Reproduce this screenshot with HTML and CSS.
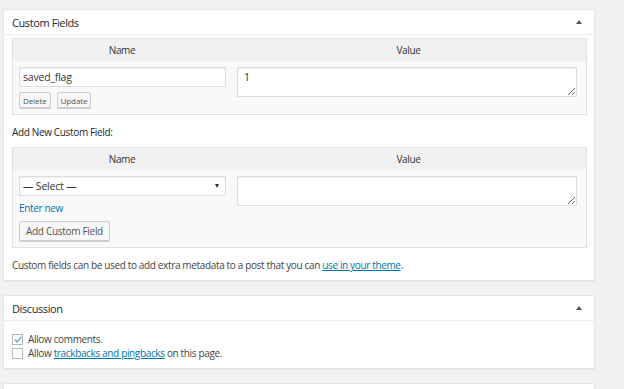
FILE: index.html
```html
<!DOCTYPE html>
<html lang="en">
<head>
    <meta charset="UTF-8">
    <title>Custom Fields</title>
    <link rel="stylesheet" href="styles.css">
</head>
<body>
    <div class="postbox">
        <div class="postbox-head">
            <h2>Custom Fields</h2>
            <span class="toggle"></span>
        </div>
        <div class="inside">
            <div class="meta-table">
                <div class="meta-head">
                    <div>Name</div>
                    <div>Value</div>
                </div>
                <div class="meta-row">
                    <div class="key-cell">
                        <input type="text" class="field" value="saved_flag">
                        <div class="actions">
                            <button class="btn btn-small">Delete</button>
                            <button class="btn btn-small">Update</button>
                        </div>
                    </div>
                    <div class="value-cell">
                        <textarea class="area">1</textarea>
                    </div>
                </div>
            </div>

            <p class="add-title">Add New Custom Field:</p>

            <div class="meta-table">
                <div class="meta-head">
                    <div>Name</div>
                    <div>Value</div>
                </div>
                <div class="meta-row">
                    <div class="key-cell">
                        <div class="select">— Select —<span class="caret"></span></div>
                        <a href="#" class="enter-new">Enter new</a>
                        <button class="btn btn-add">Add Custom Field</button>
                    </div>
                    <div class="value-cell">
                        <textarea class="area"></textarea>
                    </div>
                </div>
            </div>

            <p class="note">Custom fields can be used to add extra metadata to a post that you can <a href="#">use in your theme</a>.</p>
        </div>
    </div>

    <div class="postbox">
        <div class="postbox-head">
            <h2>Discussion</h2>
            <span class="toggle"></span>
        </div>
        <div class="inside discussion">
            <label class="check"><span class="box checked"></span><span>Allow comments.</span></label>
            <label class="check"><span class="box"></span><span>Allow <a href="#">trackbacks and pingbacks</a> on this page.</span></label>
        </div>
    </div>

    <div class="postbox empty"></div>
</body>
</html>
```

FILE: styles.css
```css
body {
    font-family: "Open Sans", Arial, sans-serif;
    font-size: 10px;
    letter-spacing: -0.35px;
    color: #444;
    background-color: #f1f1f1;
    margin: 0;
    padding: 9px 29px 0 3px;
}
a {
    color: #0073aa;
}
.postbox {
    background-color: #fff;
    border: 1px solid #e5e5e5;
    box-shadow: 0 1px 1px rgba(0, 0, 0, 0.04);
    margin-bottom: 14px;
}
.postbox-head {
    display: flex;
    justify-content: space-between;
    align-items: center;
    height: 24px;
    padding: 0 12px 0 8px;
    border-bottom: 1px solid #eee;
}
.postbox-head h2 {
    margin: 0;
    font-size: 11px;
    letter-spacing: -0.4px;
    font-weight: normal;
    color: #23282d;
}
.toggle {
    width: 0;
    height: 0;
    border-left: 3px solid transparent;
    border-right: 3px solid transparent;
    border-bottom: 4px solid #555;
}
.inside {
    padding: 3px 7px 7px 8px;
}
.meta-table {
    border: 1px solid #e1e1e1;
    background-color: #f9f9f9;
}
.meta-head {
    display: grid;
    grid-template-columns: 218px 1fr;
    background-color: #f1f1f1;
    height: 22px;
    line-height: 22px;
    text-align: center;
    color: #333;
}
.meta-row {
    display: grid;
    grid-template-columns: 218px 1fr;
    padding: 6px 0 6px;
}
.key-cell {
    padding: 0 5px 0 6px;
    display: flex;
    flex-direction: column;
    align-items: flex-start;
}
.value-cell {
    padding: 0 9px 0 6px;
}
.field, .select {
    box-sizing: border-box;
    width: 100%;
    height: 20px;
    border: 1px solid #ddd;
    background-color: #fff;
    box-shadow: inset 0 1px 2px rgba(0, 0, 0, 0.07);
    font-family: inherit;
    font-size: 10.5px;
    letter-spacing: -0.2px;
    color: #32373c;
    padding: 0 3px;
    margin: 0;
}
.select {
    display: flex;
    align-items: center;
    justify-content: space-between;
    line-height: 18px;
    padding: 0 6px 0 3px;
}
.caret {
    width: 0;
    height: 0;
    border-left: 2.5px solid transparent;
    border-right: 2.5px solid transparent;
    border-top: 4px solid #333;
}
.area {
    display: block;
    box-sizing: border-box;
    width: 100%;
    height: 30px;
    border: 1px solid #ddd;
    background-color: #fff;
    box-shadow: inset 0 1px 2px rgba(0, 0, 0, 0.07);
    font-family: inherit;
    font-size: 10.5px;
    color: #32373c;
    padding: 2px 6px;
    margin: 0;
}
.actions {
    display: flex;
    gap: 6px;
    margin-top: 5px;
}
.btn {
    font-family: inherit;
    color: #555;
    background-color: #f7f7f7;
    border: 1px solid #ccc;
    border-radius: 2px;
    box-shadow: 0 1px 0 #ccc;
    margin: 0;
    cursor: pointer;
}
.btn-small {
    font-size: 8px;
    letter-spacing: -0.1px;
    height: 16px;
    padding: 0 3px;
}
.btn-add {
    font-size: 10px;
    letter-spacing: -0.3px;
    height: 20px;
    padding: 0 6px;
    margin-top: 6px;
}
.enter-new {
    text-decoration: none;
    margin-top: 5px;
    line-height: 14px;
}
.add-title {
    margin: 10px 0 8px;
    color: #23282d;
}
.note {
    margin: 10px 0 1px;
}
.discussion {
    padding: 11px 8px 8px;
}
.check {
    display: flex;
    align-items: center;
    line-height: 14px;
}
.box {
    box-sizing: border-box;
    width: 11px;
    height: 11px;
    border: 1px solid #b4b9be;
    background-color: #fff;
    margin-right: 5px;
    position: relative;
}
.box.checked::after {
    content: "";
    position: absolute;
    left: 3px;
    top: 0;
    width: 3px;
    height: 6px;
    border-right: 1.5px solid #1e8cbe;
    border-bottom: 1.5px solid #1e8cbe;
    transform: rotate(40deg);
}
.empty {
    height: 20px;
}
```
